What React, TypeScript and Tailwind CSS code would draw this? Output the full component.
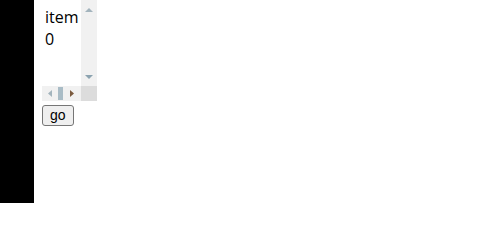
import React from "react";

export default function App() {
  return (
    <div className="flex h-[203px] w-[502px] bg-white" style={{ fontFamily: '"Open Sans", "Noto Sans", sans-serif' }}>
      <div className="w-[34px] shrink-0 bg-black" />
      <div className="flex flex-col items-start pl-[8px]">
        <div className="grid h-[101px] w-[55px] grid-cols-[39px_16px] grid-rows-[86px_15px]">
          <div className="overflow-hidden pl-[3px] pt-[6px] text-[16px] leading-[22px] text-black">
            <div>item</div>
            <div>0</div>
          </div>
          <div className="flex flex-col items-center justify-between bg-[#f1f1f1] pb-[7px] pt-[8px]">
            <svg width="8" height="4" viewBox="0 0 8 4">
              <polygon points="0,4 8,4 4,0" fill="#a3b4bd" />
            </svg>
            <svg width="8" height="4" viewBox="0 0 8 4">
              <polygon points="0,0 8,0 4,4" fill="#8ca3b0" />
            </svg>
          </div>
          <div className="flex items-center bg-[#f1f1f1] pl-[6px]">
            <svg width="4" height="7" viewBox="0 0 4 7">
              <polygon points="4,0 4,7 0,3.5" fill="#a3b4bd" />
            </svg>
            <div className="ml-[6px] h-[13px] w-[5px] bg-[#a9bcc6]" />
            <svg className="ml-[7px]" width="4" height="7" viewBox="0 0 4 7">
              <polygon points="0,0 0,7 4,3.5" fill="#7a5a3e" />
            </svg>
          </div>
          <div className="bg-[#dcdcdc]" />
        </div>
        <button
          className="mt-[4px] h-[21px] rounded-[3px] border border-[#767676] bg-[#efefef] px-[7px] text-[14px] leading-[17px] text-black"
          style={{ fontFamily: '"Liberation Sans", Arial, sans-serif' }}
        >
          go
        </button>
      </div>
    </div>
  );
}
